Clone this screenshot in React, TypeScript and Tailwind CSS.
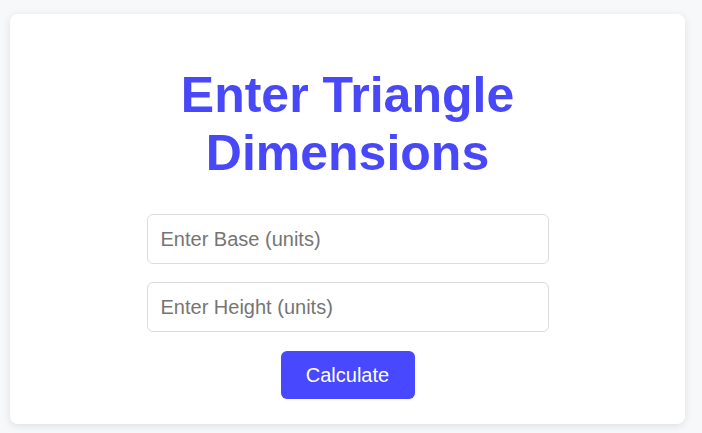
export default function App() {
  return (
    <div className="min-h-screen bg-[#f7f8fa] pl-[10px] pt-[14px] font-['Liberation_Sans',Arial,sans-serif]">
      <div className="flex h-[410px] w-[675px] flex-col items-center rounded-lg bg-white px-6 pt-[52px] shadow-[0_2px_8px_rgba(0,0,0,0.1)]">
        <h1 className="text-center text-[50px] font-bold leading-[58px] text-[#4848f8]">
          Enter Triangle
          <br />
          Dimensions
        </h1>
        <input
          type="text"
          placeholder="Enter Base (units)"
          className="mt-[32px] h-[50px] w-[402px] rounded-md border border-[#dcdcdc] px-[13px] text-[20px] text-gray-800 outline-none placeholder:text-[#757575]"
        />
        <input
          type="text"
          placeholder="Enter Height (units)"
          className="mt-[18px] h-[50px] w-[402px] rounded-md border border-[#dcdcdc] px-[13px] text-[20px] text-gray-800 outline-none placeholder:text-[#757575]"
        />
        <button className="mt-[19px] h-[48px] w-[134px] rounded-md bg-[#4848ff] text-[20px] text-white">
          Calculate
        </button>
      </div>
    </div>
  );
}
